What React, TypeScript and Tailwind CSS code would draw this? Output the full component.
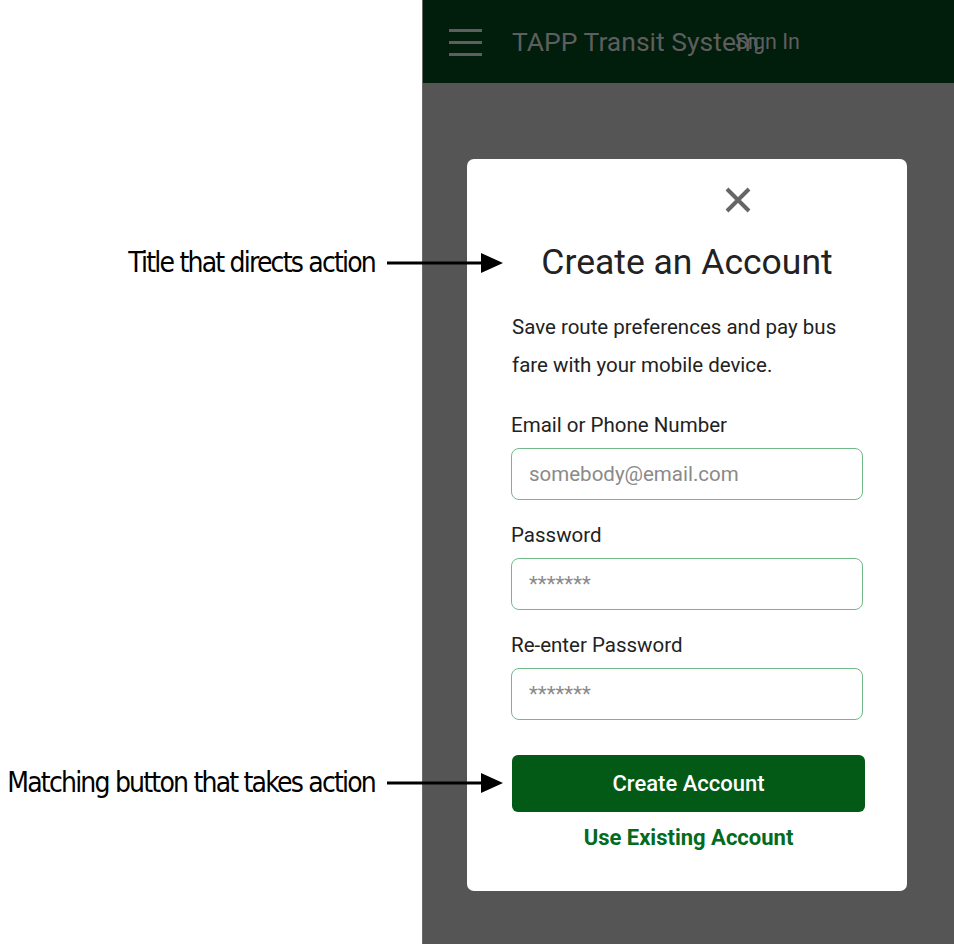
import React from "react";

function Arrow({ width }: { width: number }) {
  return (
    <svg width={width} height="24" viewBox={`0 0 ${width} 24`}>
      <line x1="0" y1="12" x2={width - 20} y2="12" stroke="#000" strokeWidth="3" />
      <polygon points={`${width - 22},2 ${width},12 ${width - 22},22`} fill="#000" />
    </svg>
  );
}

function Field({ label, placeholder }: { label: string; placeholder: string }) {
  return (
    <div className="flex flex-col">
      <div className="text-[20.5px] leading-[24px] text-[#222]">{label}</div>
      <div className="mt-[11px] h-[52px] w-[352px] rounded-[8px] border border-[#72b98a] flex items-center pl-[17px]">
        <span className="text-[20.5px] text-[#8a8a8a]">{placeholder}</span>
      </div>
    </div>
  );
}

const annoFont = { fontFamily: "'DejaVu Sans Condensed', 'Liberation Sans Narrow', Roboto, sans-serif" };

export default function App() {
  return (
    <div className="relative flex w-[954px] h-[944px] bg-white overflow-hidden" style={{ fontFamily: "Roboto, 'Noto Sans', sans-serif" }}>
      <div className="w-[422px] shrink-0" />
      <div className="flex-1 flex flex-col bg-[#555555] border-l border-[#6a6a6a]">
        <div className="h-[83px] bg-[#011d0c] flex items-center pl-[26px] relative">
          <div className="flex flex-col gap-[9px] mt-[1px]">
            <div className="w-[33px] h-[3px] bg-[#5e5e5e]" />
            <div className="w-[33px] h-[3px] bg-[#5e5e5e]" />
            <div className="w-[33px] h-[3px] bg-[#5e5e5e]" />
          </div>
          <div className="ml-[30px] text-[26.5px] text-[#5e5e5e] whitespace-nowrap">TAPP Transit System</div>
          <div className="absolute left-[312px] top-[29px] text-[21.5px] leading-[26px] text-[#5e5e5e] whitespace-nowrap">Sign In</div>
        </div>
        <div className="pl-[44px] pt-[76px]">
          <div className="w-[440px] h-[732px] bg-white rounded-[7px] flex flex-col items-center pt-[27px]">
            <svg width="28" height="28" viewBox="0 0 28 28" className="ml-[101px]">
              <path d="M3 3 L25 25 M25 3 L3 25" stroke="#666" strokeWidth="4" />
            </svg>
            <div className="mt-[28px] text-[35.5px] leading-[40px] text-[#222]">Create an Account</div>
            <div className="mt-[26px] w-[354px] text-[20.5px] leading-[38px] text-[#222] pl-[2px]">
              Save route preferences and pay bus fare with your mobile device.
            </div>
            <div className="mt-[29px] flex flex-col gap-[23px]">
              <Field label="Email or Phone Number" placeholder="somebody@email.com" />
              <Field label="Password" placeholder="*******" />
              <Field label="Re-enter Password" placeholder="*******" />
            </div>
            <div className="mt-[35px] w-[353px] h-[57px] rounded-[6px] bg-[#035a17] flex items-center justify-center ml-[3px]">
              <span className="text-[22px] font-medium text-white">Create Account</span>
            </div>
            <div className="mt-[13px] text-[22px] leading-[26px] font-bold text-[#046a1d] ml-[3px]">Use Existing Account</div>
          </div>
        </div>
      </div>

      <div className="absolute left-0 top-[242px] w-[503px] flex items-center justify-end gap-[12px]">
        <span className="text-[28px] text-black whitespace-nowrap tracking-[-1.8px]" style={annoFont}>
          Title that directs action
        </span>
        <Arrow width={116} />
      </div>
      <div className="absolute left-0 top-[762px] w-[503px] flex items-center justify-end gap-[12px]">
        <span className="text-[28px] text-black whitespace-nowrap tracking-[-1.8px]" style={annoFont}>
          Matching button that takes action
        </span>
        <Arrow width={116} />
      </div>
    </div>
  );
}
